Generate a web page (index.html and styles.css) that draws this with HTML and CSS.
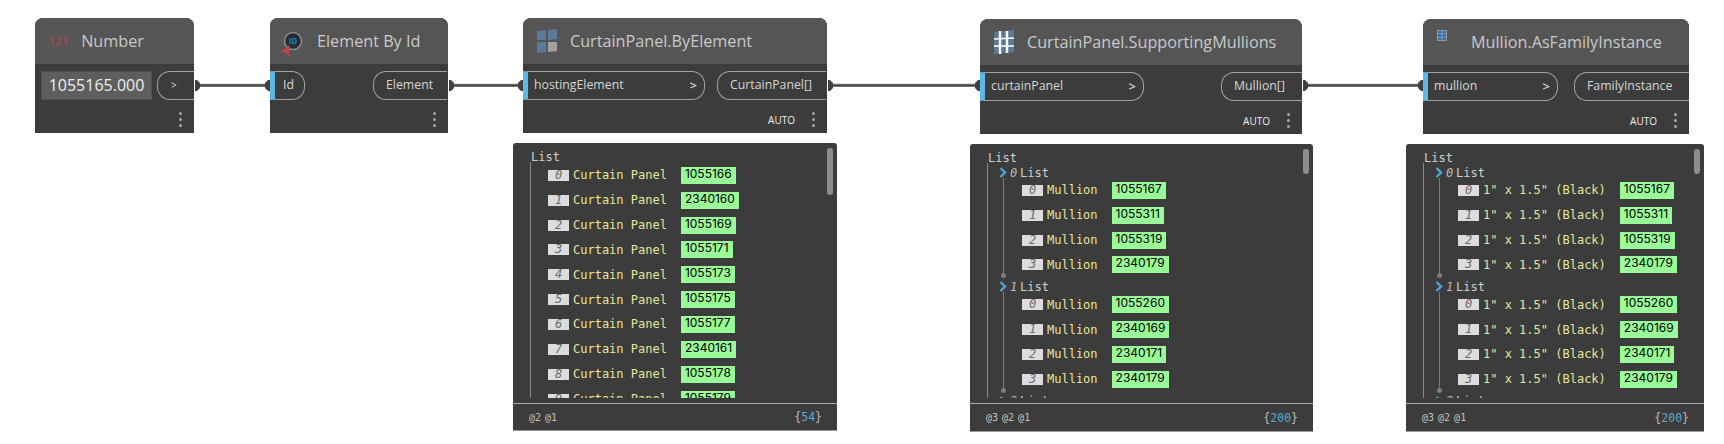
FILE: index.html
```html
<!DOCTYPE html>
<html lang="en">
<head>
    <meta charset="UTF-8">
    <title>Curtain panel graph</title>
    <link rel="stylesheet" href="styles.css">
</head>
<body>
<div class="canvas">

    <!-- wires between the nodes -->
    <svg class="wires" width="1724" height="444" viewBox="0 0 1724 444">
        <g class="wire-light">
            <line x1="198" y1="84" x2="266" y2="84"/>
            <line x1="452" y1="84" x2="519" y2="84"/>
            <line x1="831" y1="84" x2="976" y2="84"/>
            <line x1="1306" y1="84" x2="1419" y2="84"/>
        </g>
        <g class="wire-dark">
            <line x1="198" y1="85.5" x2="266" y2="85.5"/>
            <line x1="452" y1="85.5" x2="519" y2="85.5"/>
            <line x1="831" y1="85.5" x2="976" y2="85.5"/>
            <line x1="1306" y1="85.5" x2="1419" y2="85.5"/>
        </g>
        <g class="plugs">
            <path d="M195 80h2l3 3v5l-3 3h-2z"/>
            <path d="M270 80h-2l-3 3v5l3 3h2z"/>
            <path d="M449 80h2l3 3v5l-3 3h-2z"/>
            <path d="M523 80h-2l-3 3v5l3 3h2z"/>
            <path d="M828 80h2l3 3v5l-3 3h-2z"/>
            <path d="M980 80h-2l-3 3v5l3 3h2z"/>
            <path d="M1303 80h2l3 3v5l-3 3h-2z"/>
            <path d="M1423 80h-2l-3 3v5l3 3h2z"/>
        </g>
    </svg>

    <!-- Number -->
    <div class="node node-number">
        <div class="node-head">
            <span class="icon-123">123</span>
            <span class="node-title title-number">Number</span>
        </div>
        <div class="node-ports">
            <div class="num-input">1055165.000</div>
            <div class="port port-out port-go">&gt;</div>
        </div>
        <div class="node-foot"><span class="dots"><i></i><i></i><i></i></span></div>
    </div>

    <!-- Element By Id -->
    <div class="node node-byid">
        <div class="node-head">
            <svg class="icon icon-id" width="24" height="28" viewBox="0 0 24 28">
                <circle cx="13" cy="10" r="8.5" fill="#222d38" stroke="#8d8d8d" stroke-width="1.5"/>
                <text x="13" y="13" text-anchor="middle" class="icon-id-text">ID</text>
                <path d="M0 21l10-7-1 12-3-4z" fill="#b8474a"/>
            </svg>
            <span class="node-title title-byid">Element By Id</span>
        </div>
        <div class="node-ports">
            <div class="port port-in port-id"><span>Id</span></div>
            <div class="port port-out port-element">Element</div>
        </div>
        <div class="node-foot"><span class="dots"><i></i><i></i><i></i></span></div>
    </div>

    <!-- CurtainPanel.ByElement -->
    <div class="node node-panel">
        <div class="node-head">
            <svg class="icon icon-panes" width="20" height="24" viewBox="0 0 20 24">
                <path d="M0 2l9-1v10H0z" fill="#5b7a99"/>
                <path d="M11 1l9-1v10l-9 1z" fill="#5b7a99"/>
                <path d="M0 13h9v10l-9 1z" fill="#5b7a99"/>
                <path d="M11 13h9v9l-9 1z" fill="#a0a0a0"/>
            </svg>
            <span class="node-title">CurtainPanel.ByElement</span>
        </div>
        <div class="node-ports">
            <div class="port port-in port-hosting"><span>hostingElement</span><b>&gt;</b></div>
            <div class="port port-out port-panels">CurtainPanel[]</div>
        </div>
        <div class="node-foot"><span class="auto">AUTO</span><span class="dots"><i></i><i></i><i></i></span></div>
    </div>

    <!-- CurtainPanel.SupportingMullions -->
    <div class="node node-support">
        <div class="node-head">
            <svg class="icon icon-panes" width="20" height="24" viewBox="0 0 20 24">
                <path d="M0 2l20-2v22L0 24z" fill="#5b7a99"/>
                <path d="M6 1v23M13 1v22" stroke="#fff" stroke-width="2.4"/>
                <path d="M0 9l20-1M0 16h20" stroke="#fff" stroke-width="1.6"/>
            </svg>
            <span class="node-title">CurtainPanel.SupportingMullions</span>
        </div>
        <div class="node-ports">
            <div class="port port-in port-curtain"><span>curtainPanel</span><b>&gt;</b></div>
            <div class="port port-out port-mullions">Mullion[]</div>
        </div>
        <div class="node-foot"><span class="auto">AUTO</span><span class="dots"><i></i><i></i><i></i></span></div>
    </div>

    <!-- Mullion.AsFamilyInstance -->
    <div class="node node-family">
        <div class="node-head">
            <svg class="icon icon-grid" width="10" height="11" viewBox="0 0 10 11">
                <rect width="10" height="11" fill="#2d6fb0"/>
                <path d="M.5.5h9v10h-9zM5 0v11M0 3.7h10M0 7.3h10" fill="none" stroke="#8f9aa5" stroke-width="1"/>
            </svg>
            <span class="node-title title-family">Mullion.AsFamilyInstance</span>
        </div>
        <div class="node-ports">
            <div class="port port-in port-mullion"><span>mullion</span><b>&gt;</b></div>
            <div class="port port-out port-instance">FamilyInstance</div>
        </div>
        <div class="node-foot"><span class="auto">AUTO</span><span class="dots"><i></i><i></i><i></i></span></div>
    </div>

    <!-- watch: panels -->
    <div class="watch watch-panel">
        <div class="scroll scroll-long"></div>
        <div class="watch-list">
            <div class="list-title">List</div>
            <div class="list-root">
                <div class="row"><em class="idx">0</em><span class="label">Curtain Panel</span><span class="val">1055166</span></div>
                <div class="row"><em class="idx">1</em><span class="label">Curtain Panel</span><span class="val">2340160</span></div>
                <div class="row"><em class="idx">2</em><span class="label">Curtain Panel</span><span class="val">1055169</span></div>
                <div class="row"><em class="idx">3</em><span class="label">Curtain Panel</span><span class="val">1055171</span></div>
                <div class="row"><em class="idx">4</em><span class="label">Curtain Panel</span><span class="val">1055173</span></div>
                <div class="row"><em class="idx">5</em><span class="label">Curtain Panel</span><span class="val">1055175</span></div>
                <div class="row"><em class="idx">6</em><span class="label">Curtain Panel</span><span class="val">1055177</span></div>
                <div class="row"><em class="idx">7</em><span class="label">Curtain Panel</span><span class="val">2340161</span></div>
                <div class="row"><em class="idx">8</em><span class="label">Curtain Panel</span><span class="val">1055178</span></div>
                <div class="row"><em class="idx">9</em><span class="label">Curtain Panel</span><span class="val">1055179</span></div>
            </div>
        </div>
        <div class="watch-foot"><span>@2 @1</span><span class="count">{<b>54</b>}</span></div>
    </div>

    <!-- watch: mullions -->
    <div class="watch watch-support">
        <div class="scroll"></div>
        <div class="watch-list">
            <div class="list-title">List</div>
            <div class="list-root">
                <div class="sub-head"><svg class="chev" width="8" height="11" viewBox="0 0 8 11"><path d="M1.5 1l4.5 4.5L1.5 10"/></svg><em>0</em><span>List</span></div>
                <div class="group">
                    <div class="row"><em class="idx">0</em><span class="label">Mullion</span><span class="val">1055167</span></div>
                    <div class="row"><em class="idx">1</em><span class="label">Mullion</span><span class="val">1055311</span></div>
                    <div class="row"><em class="idx">2</em><span class="label">Mullion</span><span class="val">1055319</span></div>
                    <div class="row"><em class="idx">3</em><span class="label">Mullion</span><span class="val">2340179</span></div>
                </div>
                <div class="sub-head"><svg class="chev" width="8" height="11" viewBox="0 0 8 11"><path d="M1.5 1l4.5 4.5L1.5 10"/></svg><em>1</em><span>List</span></div>
                <div class="group">
                    <div class="row"><em class="idx">0</em><span class="label">Mullion</span><span class="val">1055260</span></div>
                    <div class="row"><em class="idx">1</em><span class="label">Mullion</span><span class="val">2340169</span></div>
                    <div class="row"><em class="idx">2</em><span class="label">Mullion</span><span class="val">2340171</span></div>
                    <div class="row"><em class="idx">3</em><span class="label">Mullion</span><span class="val">2340179</span></div>
                </div>
                <div class="sub-head"><svg class="chev" width="8" height="11" viewBox="0 0 8 11"><path d="M1.5 1l4.5 4.5L1.5 10"/></svg><em>2</em><span>List</span></div>
            </div>
        </div>
        <div class="watch-foot"><span>@3 @2 @1</span><span class="count">{<b>200</b>}</span></div>
    </div>

    <!-- watch: family instances -->
    <div class="watch watch-family">
        <div class="scroll"></div>
        <div class="watch-list">
            <div class="list-title">List</div>
            <div class="list-root">
                <div class="sub-head"><svg class="chev" width="8" height="11" viewBox="0 0 8 11"><path d="M1.5 1l4.5 4.5L1.5 10"/></svg><em>0</em><span>List</span></div>
                <div class="group">
                    <div class="row"><em class="idx">0</em><span class="label">1" x 1.5" (Black)</span><span class="val">1055167</span></div>
                    <div class="row"><em class="idx">1</em><span class="label">1" x 1.5" (Black)</span><span class="val">1055311</span></div>
                    <div class="row"><em class="idx">2</em><span class="label">1" x 1.5" (Black)</span><span class="val">1055319</span></div>
                    <div class="row"><em class="idx">3</em><span class="label">1" x 1.5" (Black)</span><span class="val">2340179</span></div>
                </div>
                <div class="sub-head"><svg class="chev" width="8" height="11" viewBox="0 0 8 11"><path d="M1.5 1l4.5 4.5L1.5 10"/></svg><em>1</em><span>List</span></div>
                <div class="group">
                    <div class="row"><em class="idx">0</em><span class="label">1" x 1.5" (Black)</span><span class="val">1055260</span></div>
                    <div class="row"><em class="idx">1</em><span class="label">1" x 1.5" (Black)</span><span class="val">2340169</span></div>
                    <div class="row"><em class="idx">2</em><span class="label">1" x 1.5" (Black)</span><span class="val">2340171</span></div>
                    <div class="row"><em class="idx">3</em><span class="label">1" x 1.5" (Black)</span><span class="val">2340179</span></div>
                </div>
                <div class="sub-head"><svg class="chev" width="8" height="11" viewBox="0 0 8 11"><path d="M1.5 1l4.5 4.5L1.5 10"/></svg><em>2</em><span>List</span></div>
            </div>
        </div>
        <div class="watch-foot"><span>@3 @2 @1</span><span class="count">{<b>200</b>}</span></div>
    </div>

</div>
</body>
</html>
```

FILE: styles.css
```css
body {
    margin: 0;
    background-color: #fff;
    font-family: "Open Sans", sans-serif;
}
.canvas {
    position: relative;
    width: 1724px;
    height: 444px;
    overflow: hidden;
}
.wires {
    position: absolute;
    left: 0;
    top: 0;
}
.wire-light line {
    stroke: #bdbdbd;
    stroke-width: 1;
}
.wire-dark line {
    stroke: #444;
    stroke-width: 2.5;
}
.plugs path {
    fill: #404040;
}

/* nodes */
.node {
    position: absolute;
    height: 115px;
    background-color: #3c3c3c;
    border-radius: 8px 8px 0 0;
    display: flex;
    flex-direction: column;
}
.node-number { left: 35px; top: 18px; width: 159px; }
.node-byid { left: 270px; top: 18px; width: 178px; }
.node-panel { left: 523px; top: 18px; width: 304px; }
.node-support { left: 980px; top: 19px; width: 322px; }
.node-family { left: 1423px; top: 19px; width: 266px; }

.node-head {
    height: 46px;
    flex: none;
    background-color: #555;
    border-radius: 8px 8px 0 0;
    display: flex;
    align-items: center;
    padding-left: 14px;
}
.node-title {
    color: #c9c9c9;
    font-size: 16.2px;
    margin-left: 13px;
    white-space: nowrap;
}
.title-number { margin-left: 12px; }
.title-byid { margin-left: 13px; }
.title-family { margin-left: 24px; }

.icon { flex: none; display: block; }
.icon-id { margin-left: -4px; margin-top: 8px; }
.icon-id-text {
    font-family: "Open Sans", sans-serif;
    font-size: 8px;
    font-weight: 700;
    fill: #2f79b8;
}
.icon-grid { margin-top: -14px; }
.icon-123 {
    color: #a34d4f;
    font-size: 10px;
    letter-spacing: 1px;
    font-weight: 600;
}

.node-ports {
    display: flex;
    justify-content: space-between;
    padding-top: 7px;
    height: 29px;
    flex: none;
}
.port {
    box-sizing: border-box;
    height: 29px;
    border: 1px solid #a3a3a3;
    color: #d6d6d6;
    font-size: 12.3px;
    display: flex;
    align-items: center;
    white-space: nowrap;
    padding-bottom: 2px;
}
.port-in {
    border-left: 5px solid #5cb8e6;
    border-radius: 0 13px 13px 0;
    justify-content: space-between;
    padding: 0 7px 2px 6px;
}
.port-in b {
    font-weight: 600;
    font-size: 13px;
}
.port-out {
    border-right: none;
    border-radius: 13px 0 0 13px;
    padding-left: 12px;
}
.port-id { width: 35px; padding-left: 8px; }
.port-hosting { width: 182px; }
.port-curtain { width: 164px; }
.port-mullion { width: 135px; }
.port-element { width: 74px; margin-right: 1px; }
.port-panels { width: 109px; margin-right: 1px; }
.port-mullions { width: 81px; }
.port-instance { width: 115px; }
.port-go {
    width: 37px;
    font-size: 10px;
    margin-right: 0;
    padding-left: 13px;
}
.num-input {
    box-sizing: border-box;
    width: 111px;
    height: 29px;
    margin-left: 6px;
    background-color: #5e5e5e;
    border: 1px solid #505050;
    color: #eee;
    font-size: 16px;
    line-height: 26px;
    text-align: center;
}

.node-foot {
    flex: 1;
    display: flex;
    justify-content: flex-end;
    align-items: center;
    padding: 5px 12px 0 0;
}
.auto {
    color: #eee;
    font-size: 10px;
    margin-right: 17px;
    margin-top: 2px;
}
.dots {
    display: flex;
    flex-direction: column;
    gap: 3px;
}
.dots i {
    display: block;
    width: 3px;
    height: 3px;
    border-radius: 50%;
    background-color: #a8a8a8;
}

/* watch panels */
.watch {
    position: absolute;
    background-color: #3c3c3c;
    border-radius: 3px 3px 0 0;
    border-bottom: 1px solid #999;
    box-sizing: border-box;
    font-family: "DejaVu Sans Mono", monospace;
    font-size: 12px;
    display: flex;
    flex-direction: column;
}
.watch-panel { left: 513px; top: 143px; width: 324px; height: 288px; }
.watch-support { left: 970px; top: 144px; width: 343px; height: 288px; }
.watch-family { left: 1406px; top: 144px; width: 298px; height: 288px; }

.scroll {
    position: absolute;
    right: 4px;
    top: 5px;
    width: 6px;
    height: 25px;
    border-radius: 3px;
    background-color: #8c8c8c;
}
.scroll-long { height: 47px; }

.watch-list {
    height: 247px;
    margin-top: 7px;
    overflow: hidden;
    flex: none;
}
.watch-panel .watch-list { height: 248px; }
.list-title {
    box-sizing: border-box;
    height: 12px;
    padding-top: 1px;
    line-height: 12px;
    padding-left: 18px;
    color: #cfcfcf;
}
.list-root {
    margin-left: 17px;
    border-left: 1.5px solid #8a8a8a;
    padding-top: 1px;
    min-height: 300px;
}
.watch-support .list-root, .watch-family .list-root { padding-top: 0; }
.watch-panel .row { padding-left: 17px; }

.sub-head {
    box-sizing: border-box;
    height: 15px;
    display: flex;
    align-items: center;
    color: #cfcfcf;
    padding: 4px 0 0 11px;
}
.sub-head em {
    color: #bbb;
    margin-left: 3px;
    width: 10px;
}
.chev {
    flex: none;
}
.chev path {
    fill: none;
    stroke: #4ea6d8;
    stroke-width: 2.4;
}
.group {
    position: relative;
    margin-left: 15px;
    border-left: 1.5px solid #7c7c7c;
    padding-left: 18px;
}
.group::after {
    content: "";
    position: absolute;
    left: -3.5px;
    bottom: -1px;
    width: 5px;
    height: 5px;
    border-radius: 50%;
    background-color: #7c7c7c;
}
.row {
    height: 24.85px;
    display: flex;
    align-items: center;
}
.idx {
    width: 21px;
    height: 11px;
    line-height: 11px;
    background-color: #dcdcdc;
    color: #6b6b6b;
    text-align: center;
    font-size: 12px;
    flex: none;
}
.label {
    color: #e6e69a;
    margin-left: 4px;
    white-space: nowrap;
}
.val {
    background-color: #98fb98;
    color: #000;
    font-family: Inter, sans-serif;
    font-size: 12px;
    line-height: 14px;
    height: 17px;
    padding: 0 4px;
    margin-left: 14px;
    white-space: nowrap;
}

.watch-foot {
    margin-top: 5px;
    border-top: 1px solid #a8a8a8;
    flex: 1;
    display: flex;
    justify-content: space-between;
    align-items: center;
    padding: 0 15px 0 16px;
    font-size: 10px;
    word-spacing: -2px;
    color: #c0c0c0;
}
.count {
    font-size: 11.5px;
    color: #bbb;
}
.count b {
    font-weight: 400;
    color: #5aa9d6;
}
```
